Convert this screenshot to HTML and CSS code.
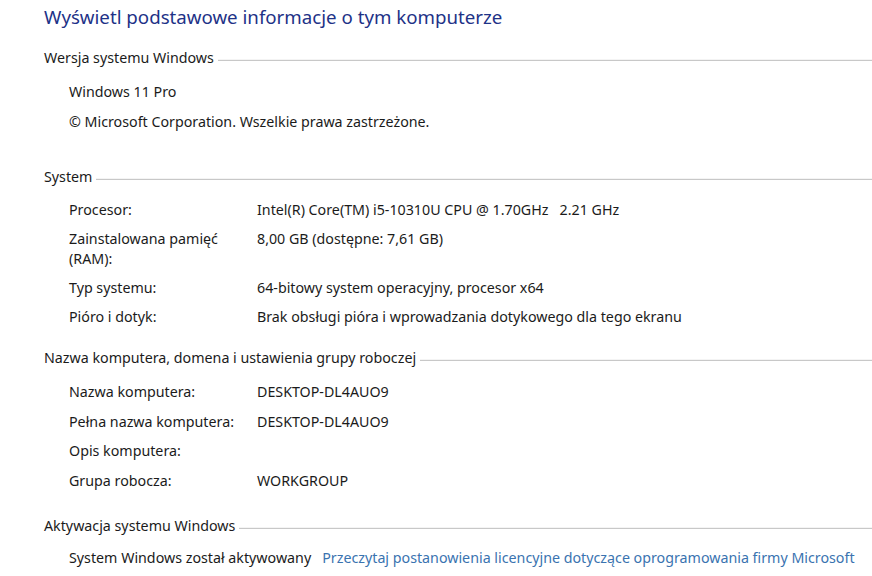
FILE: index.html
```html
<!DOCTYPE html>
<html lang="pl">
<head>
<meta charset="utf-8">
<title>System</title>
<link rel="stylesheet" href="styles.css">
</head>
<body>
<main class="page">
  <h1 class="title">Wyświetl podstawowe informacje o tym komputerze</h1>

  <section class="group group-edition">
    <h2 class="group-head"><span class="group-label">Wersja systemu Windows</span><span class="group-rule"></span></h2>
    <div class="rows">
      <div class="row"><span class="plain">Windows 11 Pro</span></div>
      <div class="row"><span class="plain">© Microsoft Corporation. Wszelkie prawa zastrzeżone.</span></div>
    </div>
  </section>

  <section class="group group-system">
    <h2 class="group-head"><span class="group-label">System</span><span class="group-rule"></span></h2>
    <div class="rows rows-tight">
      <div class="row"><span class="label">Procesor:</span><span class="value">Intel(R) Core(TM) i5-10310U CPU @ 1.70GHz&nbsp;&nbsp;&nbsp;2.21 GHz</span></div>
      <div class="row"><span class="label">Zainstalowana pamięć (RAM):</span><span class="value">8,00 GB (dostępne: 7,61 GB)</span></div>
      <div class="row"><span class="label">Typ systemu:</span><span class="value">64-bitowy system operacyjny, procesor x64</span></div>
      <div class="row"><span class="label">Pióro i dotyk:</span><span class="value">Brak obsługi pióra i wprowadzania dotykowego dla tego ekranu</span></div>
    </div>
  </section>

  <section class="group group-computer">
    <h2 class="group-head"><span class="group-label">Nazwa komputera, domena i ustawienia grupy roboczej</span><span class="group-rule"></span></h2>
    <div class="rows">
      <div class="row"><span class="label">Nazwa komputera:</span><span class="value">DESKTOP-DL4AUO9</span></div>
      <div class="row"><span class="label">Pełna nazwa komputera:</span><span class="value">DESKTOP-DL4AUO9</span></div>
      <div class="row"><span class="label">Opis komputera:</span><span class="value"></span></div>
      <div class="row"><span class="label">Grupa robocza:</span><span class="value">WORKGROUP</span></div>
    </div>
  </section>

  <section class="group group-activation">
    <h2 class="group-head"><span class="group-label">Aktywacja systemu Windows</span><span class="group-rule"></span></h2>
    <div class="rows rows-activation">
      <div class="row"><span class="plain">System Windows został aktywowany</span><a class="link" href="#">Przeczytaj postanowienia licencyjne dotyczące oprogramowania firmy Microsoft</a></div>
    </div>
  </section>
</main>
</body>
</html>
```

FILE: styles.css
```css
html, body {
  margin: 0;
  padding: 0;
  background: #ffffff;
}

body {
  font-family: "Noto Sans", "Open Sans", "Liberation Sans", sans-serif;
  font-size: 14.25px;
  color: #1b1b1b;
  overflow: hidden;
}

.page {
  padding: 4px 0 0 44px;
}

.title {
  margin: 0;
  font-size: 18.7px;
  line-height: 26px;
  font-weight: 400;
  color: #1e3287;
  white-space: nowrap;
}

.group-head {
  display: flex;
  align-items: center;
  margin: 0 0 13px 0;
  font-size: 14.25px;
  font-weight: 400;
  line-height: 20px;
  color: #1b1b1b;
}

.group-label {
  white-space: nowrap;
}

.group-rule {
  flex: 1;
  height: 0;
  margin: 5px 0 0 4px;
  border-top: 1px solid #c8c8c8;
  box-shadow: 0 -1px 0 #f4f4f4;
}

.group-edition { margin-top: 18px; }
.group-system { margin-top: 35px; }
.group-computer { margin-top: 21px; }
.group-activation { margin-top: 25px; }

.group-edition .group-head,
.group-computer .group-head { margin-bottom: 14px; }
.group-activation .group-head { margin-bottom: 12px; }

.rows {
  display: flex;
  flex-direction: column;
  gap: 9.75px;
  padding-left: 25px;
}

.rows-tight { gap: 9px; }

.row {
  display: flex;
  line-height: 20px;
  min-height: 20px;
}

.label {
  flex: 0 0 188px;
  width: 188px;
  padding-right: 20px;
  box-sizing: border-box;
}

.value {
  white-space: nowrap;
}

.plain {
  white-space: nowrap;
}

.link {
  margin-left: 11px;
  color: #3a73b0;
  text-decoration: none;
  white-space: nowrap;
}
```
